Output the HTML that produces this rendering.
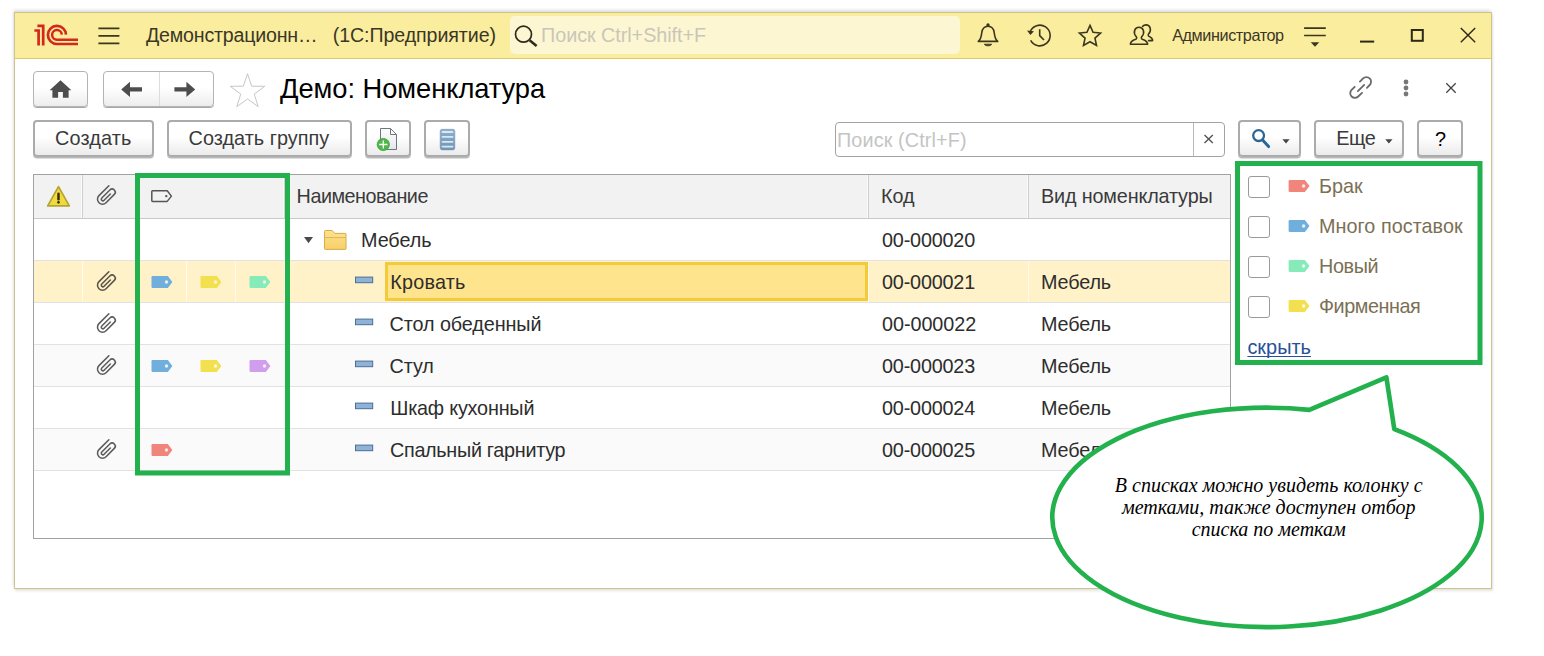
<!DOCTYPE html>
<html lang="ru">
<head>
<meta charset="utf-8">
<title>Демо: Номенклатура</title>
<style>
*{box-sizing:border-box;margin:0;padding:0}
html,body{width:1544px;height:656px;overflow:hidden;background:#fff}
body{position:relative;font-family:"Liberation Sans",Arial,sans-serif;color:#2e2e2e}
#win{position:absolute;left:14px;top:12px;width:1478px;height:577px;background:#fff;border:1px solid #cdc48c;box-shadow:-1.5px -2px 3px rgba(0,0,0,.14),0.5px 1.5px 2.5px rgba(0,0,0,.11)}
#tbar{position:absolute;left:15px;top:13px;width:1476px;height:46px;background:#fbed9e;border-bottom:1px solid #dccb6c}
#gsearch{position:absolute;left:510px;top:16px;width:450px;height:38px;border-radius:5px;background:#fdf6d3}
.t{position:absolute;white-space:pre;line-height:1}
.btn{position:absolute;border:1px solid #b4b4b4;border-radius:4px;background:linear-gradient(#fff 45%,#ededed);box-shadow:0 1px 0 #a8a8a8}
.cbtn{position:absolute;border:2px solid #ababab;border-radius:4px;background:linear-gradient(#fff 45%,#ebebeb);box-shadow:0 1.5px 0.6px #bababa}
svg{position:absolute;overflow:visible}
.box{position:absolute}
.chk{position:absolute;width:22px;height:22px;border:1px solid #9a9a9a;border-radius:3px;background:#fff}
</style>
</head>
<body>
<div id="win"></div>
<header id="titlebar">
<div id="tbar"></div><div id="gsearch"></div>
<svg style="left:0px;top:0px;" width="1544" height="656" viewBox="0 0 1544 656"><g fill="none" stroke="#d3281d" stroke-width="2.7" stroke-linejoin="miter"><path d="M34.4 30.5 H38.6 V45.4"/><path d="M37.4 25.8 H43.2 V45.4"/><path d="M66.01 34.63 A9.05 9.05 0 1 0 56.96 43.98 H78"/><path stroke-width="2.5" d="M61.81 34.63 A4.85 4.85 0 1 0 56.96 39.78 H78"/></g><g stroke="#3b371f" stroke-width="1.7"><path d="M98.4 28.3H119.4M98.4 35.8H119.4M98.4 43.3H119.4"/></g><g fill="none" stroke="#2f2c1c" stroke-width="1.7"><circle cx="523.5" cy="34.2" r="8"/><path stroke-width="2.6" d="M529.6 40.3L536.6 46"/></g><g fill="none" stroke="#3b371f" stroke-width="1.6" stroke-linejoin="round"><path d="M978.3 41.4 C981.2 39 981.3 36.5 981.7 33 C982.2 28.6 984.8 26.2 988 26.2 C991.2 26.2 993.8 28.6 994.3 33 C994.7 36.5 994.8 39 997.7 41.4 Z"/><circle cx="988" cy="24.9" r="0.9" fill="#3b371f"/><path d="M984.3 44.2 H991.7 C990.8 46.4 985.2 46.4 984.3 44.2Z" fill="#3b371f" stroke-width="0.8"/></g><g fill="none" stroke="#3b371f" stroke-width="1.6"><path d="M1030.07 31.96 A10.35 10.35 0 1 1 1030.66 40.36"/><path d="M1039.7 29.2 V35.6 L1044 40"/><path d="M1027 30.4 L1034 31.2 L1030.4 35Z" fill="#3b371f" stroke="none"/></g><polygon points="1090.00,25.40 1093.06,32.29 1100.56,33.07 1094.95,38.11 1096.52,45.48 1090.00,41.70 1083.48,45.48 1085.05,38.11 1079.44,33.07 1086.94,32.29" fill="none" stroke="#3b371f" stroke-width="1.6" stroke-linejoin="miter"/><g fill="none" stroke="#3b371f" stroke-width="1.6" stroke-linejoin="round" stroke-linecap="round"><path d="M1130.4 44.2 C1130.4 40.8 1134 40.3 1136.3 38.9 C1136.9 38.2 1136.9 37.6 1136.3 36.8 C1132.6 32.6 1134.6 27.3 1139 27.3 C1143.4 27.3 1145.4 32.6 1141.7 36.8 C1141.1 37.6 1141.1 38.2 1141.7 38.9 C1144 40.3 1147.6 40.8 1147.6 44.2 Z"/><path d="M1142.6 26.4 C1143.6 25.3 1144.8 24.9 1146 24.9 C1150.2 24.9 1152 30 1148.6 34 C1148 34.8 1148 35.4 1148.6 36.1 C1150.6 37.3 1152.6 37.8 1152.6 40.6 H1148.6"/></g><g stroke="#3b371f" stroke-width="1.6"><path d="M1304.1 28.1H1325.8M1304.1 35.5H1325.8"/><path d="M1310.7 42.3H1319.3L1315 46.8Z" fill="#3b371f" stroke="none"/></g><g stroke="#2c2a1a" fill="none"><path stroke-width="2" d="M1360 41.6H1374.2"/><rect x="1411.8" y="30" width="11" height="10.8" stroke-width="2"/><path stroke-width="1.45" d="M1460.8 27.9L1475.2 42.3M1475.2 27.9L1460.8 42.3"/></g></svg>
<div class="t" style="left:146.00px;top:26.11px;font-size:19.6px;color:#3a3726;letter-spacing:-0.195px;">Демонстрационн…</div>
<div class="t" style="left:332.70px;top:26.11px;font-size:19.6px;color:#3a3726;letter-spacing:-0.065px;">(1С:Предприятие)</div>
<div class="t" style="left:541.00px;top:26.44px;font-size:19.8px;color:#c9c6b8;letter-spacing:-0.045px;">Поиск Ctrl+Shift+F</div>
<div class="t" style="left:1172.20px;top:26.79px;font-size:16.2px;color:#3a3726;letter-spacing:-0.407px;">Администратор</div>
</header>
<nav id="navrow">
<div class="btn" style="left:33px;top:71px;width:55px;height:36px"></div>
<div class="btn" style="left:103px;top:71px;width:111px;height:36px"></div>
<div class="box" style="left:159px;top:72px;width:1px;height:34px;background:#dcdcdc"></div>
<svg style="left:0px;top:0px;" width="1544" height="656" viewBox="0 0 1544 656"><path fill="#4d4d4d" d="M60.5 80.3 L71.4 90.2 H68.6 V97.8 H62.9 V92 H58.1 V97.8 H52.4 V90.2 H49.6 Z"/><path fill="#4d4d4d" d="M121.2 89.4 L130 81.8 V87.2 H142 V91.6 H130 V97 Z"/><path fill="#4d4d4d" d="M195.2 89.4 L186.4 81.8 V87.2 H174.4 V91.6 H186.4 V97 Z"/><polygon points="247.50,73.70 251.67,86.16 264.81,86.28 254.25,94.09 258.20,106.62 247.50,99.00 236.80,106.62 240.75,94.09 230.19,86.28 243.33,86.16" fill="none" stroke="#c6c6c6" stroke-width="1"/><g fill="none" stroke="#6a6a6a" stroke-width="1.8" stroke-linecap="round"><path d="M1359.9 81.6 L1363.1 78.4 A4.6 4.6 0 0 1 1369.7 85 L1366.9 87.9"/><path d="M1357.9 91.2 L1364.2 84.9"/><path d="M1354.7 86.8 L1351.6 89.9 A4.6 4.6 0 0 0 1358.2 96.5 L1362 92.8"/></g><g fill="#777"><circle cx="1406" cy="82" r="2.4"/><circle cx="1406" cy="88" r="2.4"/><circle cx="1406" cy="94" r="2.4"/></g><path stroke="#444" stroke-width="1.3" d="M1446.3 83.3L1455.7 92.7M1455.7 83.3L1446.3 92.7"/></svg>
<div class="t" style="left:280.00px;top:75.49px;font-size:27.3px;color:#000;letter-spacing:-0.046px;">Демо: Номенклатура</div>
</nav>
<div id="cmdbar">
<div class="cbtn" style="left:33px;top:120px;width:121px;height:37px"></div>
<div class="cbtn" style="left:167px;top:120px;width:185px;height:37px"></div>
<div class="cbtn" style="left:365px;top:120px;width:46px;height:37px"></div>
<div class="cbtn" style="left:424px;top:120px;width:46px;height:37px"></div>
<div class="cbtn" style="left:1238px;top:120px;width:63px;height:37px"></div>
<div class="cbtn" style="left:1314px;top:120px;width:90px;height:37px"></div>
<div class="cbtn" style="left:1417px;top:120px;width:46px;height:37px"></div>
<div class="t" style="left:55.00px;top:129.00px;font-size:19.85px;color:#3a3a3a;letter-spacing:0.154px;">Создать</div>
<div class="t" style="left:188.60px;top:129.00px;font-size:19.85px;color:#3a3a3a;letter-spacing:0.024px;">Создать группу</div>
<div class="t" style="left:1336.20px;top:129.00px;font-size:19.85px;color:#3a3a3a;letter-spacing:-0.370px;">Еще</div>
<div class="t" style="left:1435.00px;top:130.20px;font-size:19.85px;color:#000;">?</div>
<div class="box" style="left:835px;top:122px;width:390px;height:35px;border:1px solid #a3a3a3;border-radius:4px;background:#fff"></div>
<div class="box" style="left:1193px;top:123px;width:1px;height:33px;background:#b9b9b9"></div>
<div class="t" style="left:837.00px;top:130.64px;font-size:19.8px;color:#c4c4c4;letter-spacing:0.131px;">Поиск (Ctrl+F)</div>
<svg style="left:0px;top:0px;" width="1544" height="656" viewBox="0 0 1544 656"><defs><linearGradient id="dg" x1="0" y1="0" x2="0" y2="1"><stop offset="0" stop-color="#fff"/><stop offset="1" stop-color="#e4e6ea"/></linearGradient><linearGradient id="lg" x1="0" y1="0" x2="0" y2="1"><stop offset="0" stop-color="#8fb0cc"/><stop offset="1" stop-color="#6f94b6"/></linearGradient></defs><path d="M380.5 128.5 H390.5 L396.5 134.5 V149.5 H380.5 Z" fill="url(#dg)" stroke="#70757f" stroke-width="1"/><path d="M390.5 128.5 V134.5 H396.5" fill="none" stroke="#70757f" stroke-width="1"/><circle cx="383.3" cy="144.5" r="6.1" fill="#4db848" stroke="#3c9c3c" stroke-width="0.8"/><path d="M379.2 144.5H387.4M383.3 140.4V148.6" stroke="#fff" stroke-width="1.3"/><rect x="440.2" y="129.3" width="14.6" height="20.6" rx="2" fill="url(#lg)" stroke="#7796b3" stroke-width="0.6"/><g stroke="#d8e8f4" stroke-width="1.8" stroke-linecap="round"><path d="M442.5 132H452.5M442.5 136.9H452.5M442.5 141.8H452.5M442.5 146.6H452.5"/></g><g fill="none" stroke="#2a6596"><circle cx="1258.6" cy="135.6" r="5.4" stroke-width="2.3"/><path stroke-width="3" stroke-linecap="round" d="M1262.8 140.2L1268.6 146.6"/></g><path fill="#444" d="M1282.4 139.2H1289.6000000000001L1286.0 143.39999999999998Z"/><path fill="#444" d="M1385.3 139.2H1392.5L1388.8999999999999 143.39999999999998Z"/><path stroke="#555" stroke-width="1.4" d="M1204.5 135L1212.8 143M1212.8 135L1204.5 143"/></svg>
</div>
<main id="list">
<div class="box" style="left:33px;top:174px;width:1198px;height:365px;border:1px solid #a2a2a2;background:#fff"></div>
<div class="box" style="left:34px;top:175px;width:1196px;height:44px;background:#f2f2f2;border-bottom:1px solid #c9c9c9"></div>
<div class="box" style="left:82px;top:175px;width:1px;height:43px;background:#cfcfcf"></div>
<div class="box" style="left:81px;top:175px;width:1px;height:43px;background:#fafafa"></div>
<div class="box" style="left:284px;top:175px;width:1px;height:43px;background:#cfcfcf"></div>
<div class="box" style="left:283px;top:175px;width:1px;height:43px;background:#fafafa"></div>
<div class="box" style="left:868px;top:175px;width:1px;height:43px;background:#cfcfcf"></div>
<div class="box" style="left:867px;top:175px;width:1px;height:43px;background:#fafafa"></div>
<div class="box" style="left:1028px;top:175px;width:1px;height:43px;background:#cfcfcf"></div>
<div class="box" style="left:1027px;top:175px;width:1px;height:43px;background:#fafafa"></div>
<div class="box" style="left:34px;top:219px;width:1196px;height:42px;background:#fff;border-bottom:1px solid #e2e2e2"></div>
<div class="box" style="left:34px;top:261px;width:1196px;height:42px;background:#fff2c9;border-bottom:1px solid #e2e2e2"></div>
<div class="box" style="left:34px;top:303px;width:1196px;height:42px;background:#fff;border-bottom:1px solid #e2e2e2"></div>
<div class="box" style="left:34px;top:345px;width:1196px;height:42px;background:#fafafa;border-bottom:1px solid #e2e2e2"></div>
<div class="box" style="left:34px;top:387px;width:1196px;height:42px;background:#fff;border-bottom:1px solid #e2e2e2"></div>
<div class="box" style="left:34px;top:429px;width:1196px;height:42px;background:#fafafa;border-bottom:1px solid #e2e2e2"></div>
<div class="box" style="left:82px;top:261px;width:1px;height:41px;background:#fffaeb"></div>
<div class="box" style="left:186px;top:261px;width:1px;height:41px;background:#fffaeb"></div>
<div class="box" style="left:235px;top:261px;width:1px;height:41px;background:#fffaeb"></div>
<div class="box" style="left:284px;top:261px;width:1px;height:41px;background:#fffaeb"></div>
<div class="box" style="left:868px;top:261px;width:1px;height:41px;background:#fffaeb"></div>
<div class="box" style="left:1028px;top:261px;width:1px;height:41px;background:#fffaeb"></div>
<div class="box" style="left:385px;top:262px;width:483px;height:38.5px;background:#ffe48e;border:3px solid #f2ca3a"></div>
<div class="t" style="left:296.60px;top:187.44px;font-size:19.8px;color:#3a3a3a;letter-spacing:-0.484px;">Наименование</div>
<div class="t" style="left:881.00px;top:187.44px;font-size:19.8px;color:#3a3a3a;letter-spacing:-0.045px;">Код</div>
<div class="t" style="left:1041.00px;top:187.44px;font-size:19.8px;color:#3a3a3a;letter-spacing:-0.145px;">Вид номенклатуры</div>
<div class="t" style="left:361.00px;top:230.84px;font-size:19.8px;color:#2d2d2d;letter-spacing:-0.055px;">Мебель</div>
<div class="t" style="left:882.00px;top:230.84px;font-size:19.8px;color:#2d2d2d;letter-spacing:-0.175px;">00-000020</div>
<div class="t" style="left:390.20px;top:272.84px;font-size:19.8px;color:#2d2d2d;letter-spacing:0.227px;">Кровать</div>
<div class="t" style="left:882.00px;top:272.84px;font-size:19.8px;color:#2d2d2d;letter-spacing:-0.175px;">00-000021</div>
<div class="t" style="left:1041.00px;top:272.84px;font-size:19.8px;color:#2d2d2d;letter-spacing:-0.135px;">Мебель</div>
<div class="t" style="left:389.60px;top:314.84px;font-size:19.8px;color:#2d2d2d;letter-spacing:-0.086px;">Стол обеденный</div>
<div class="t" style="left:882.00px;top:314.84px;font-size:19.8px;color:#2d2d2d;letter-spacing:-0.050px;">00-000022</div>
<div class="t" style="left:1041.00px;top:314.84px;font-size:19.8px;color:#2d2d2d;letter-spacing:-0.135px;">Мебель</div>
<div class="t" style="left:389.60px;top:356.84px;font-size:19.8px;color:#2d2d2d;letter-spacing:-0.141px;">Стул</div>
<div class="t" style="left:882.00px;top:356.84px;font-size:19.8px;color:#2d2d2d;letter-spacing:-0.175px;">00-000023</div>
<div class="t" style="left:1041.00px;top:356.84px;font-size:19.8px;color:#2d2d2d;letter-spacing:-0.135px;">Мебель</div>
<div class="t" style="left:390.20px;top:398.84px;font-size:19.8px;color:#2d2d2d;letter-spacing:-0.191px;">Шкаф кухонный</div>
<div class="t" style="left:882.00px;top:398.84px;font-size:19.8px;color:#2d2d2d;letter-spacing:-0.175px;">00-000024</div>
<div class="t" style="left:1041.00px;top:398.84px;font-size:19.8px;color:#2d2d2d;letter-spacing:-0.135px;">Мебель</div>
<div class="t" style="left:390.00px;top:440.84px;font-size:19.8px;color:#2d2d2d;letter-spacing:-0.296px;">Спальный гарнитур</div>
<div class="t" style="left:882.00px;top:440.84px;font-size:19.8px;color:#2d2d2d;letter-spacing:-0.175px;">00-000025</div>
<div class="t" style="left:1041.00px;top:440.84px;font-size:19.8px;color:#2d2d2d;letter-spacing:-0.135px;">Мебель</div>
<svg style="left:0px;top:0px;" width="1544" height="656" viewBox="0 0 1544 656"><path d="M58.5 186.6 L69.3 205.9 H47.7 Z" fill="#f0da3e" stroke="#b4a433" stroke-width="1.7" stroke-linejoin="round"/><path d="M58.5 193.7V199.2" stroke="#3a3008" stroke-width="2.5" stroke-linecap="round"/><circle cx="58.5" cy="202.3" r="1.35" fill="#3a3008"/><g transform="translate(102.30 192.30) rotate(-45)"><path d="M9.3 0 L-4.7 0 A5 5 0 0 0 -4.7 10 L7.0 10 A3.17 3.17 0 0 0 7.0 3.66 L-4.4 3.66 A1.62 1.62 0 0 0 -4.4 6.9 L4.5 6.9" fill="none" stroke="#5c5c5c" stroke-width="1.55" stroke-linecap="round"/></g><path d="M152.6 190.8 H167.2 L171.4 196.1 L167.2 201.4 H152.6 Q151.8 201.4 151.8 200.6 V191.6 Q151.8 190.8 152.6 190.8Z" fill="none" stroke="#555" stroke-width="1.5" stroke-linejoin="round"/><circle cx="166.3" cy="196.1" r="1.2" fill="#555"/><path fill="#4a4a4a" d="M304 237H313L308.5 243.3Z"/><defs><linearGradient id="fg" x1="0" y1="0" x2="0" y2="1"><stop offset="0" stop-color="#fce391"/><stop offset="1" stop-color="#f7d068"/></linearGradient></defs><path d="M325.5 230.5 H332.2 L334.8 233.4 H345.5 Q346 233.4 346 234 V248.6 Q346 249.4 345.2 249.4 H325.3 Q324.5 249.4 324.5 248.6 V231.5 Q324.5 230.5 325.5 230.5Z" fill="url(#fg)" stroke="#d8aa4c" stroke-width="1"/><path d="M324.8 237.6H345.8" stroke="#e0b456" stroke-width="1"/><rect x="355.5" y="277.1" width="17.2" height="5.6" fill="#8db3d9" stroke="#4d6f93" stroke-width="1"/><rect x="355.5" y="319.1" width="17.2" height="5.6" fill="#8db3d9" stroke="#4d6f93" stroke-width="1"/><rect x="355.5" y="361.1" width="17.2" height="5.6" fill="#8db3d9" stroke="#4d6f93" stroke-width="1"/><rect x="355.5" y="403.1" width="17.2" height="5.6" fill="#8db3d9" stroke="#4d6f93" stroke-width="1"/><rect x="355.5" y="445.1" width="17.2" height="5.6" fill="#8db3d9" stroke="#4d6f93" stroke-width="1"/><g transform="translate(102.30 278.30) rotate(-45)"><path d="M9.3 0 L-4.7 0 A5 5 0 0 0 -4.7 10 L7.0 10 A3.17 3.17 0 0 0 7.0 3.66 L-4.4 3.66 A1.62 1.62 0 0 0 -4.4 6.9 L4.5 6.9" fill="none" stroke="#5a5548" stroke-width="1.55" stroke-linecap="round"/></g><g transform="translate(102.30 320.30) rotate(-45)"><path d="M9.3 0 L-4.7 0 A5 5 0 0 0 -4.7 10 L7.0 10 A3.17 3.17 0 0 0 7.0 3.66 L-4.4 3.66 A1.62 1.62 0 0 0 -4.4 6.9 L4.5 6.9" fill="none" stroke="#5c5c5c" stroke-width="1.55" stroke-linecap="round"/></g><g transform="translate(102.30 362.30) rotate(-45)"><path d="M9.3 0 L-4.7 0 A5 5 0 0 0 -4.7 10 L7.0 10 A3.17 3.17 0 0 0 7.0 3.66 L-4.4 3.66 A1.62 1.62 0 0 0 -4.4 6.9 L4.5 6.9" fill="none" stroke="#5c5c5c" stroke-width="1.55" stroke-linecap="round"/></g><g transform="translate(102.30 446.30) rotate(-45)"><path d="M9.3 0 L-4.7 0 A5 5 0 0 0 -4.7 10 L7.0 10 A3.17 3.17 0 0 0 7.0 3.66 L-4.4 3.66 A1.62 1.62 0 0 0 -4.4 6.9 L4.5 6.9" fill="none" stroke="#5c5c5c" stroke-width="1.55" stroke-linecap="round"/></g><path fill="#70aedc" d="M152.70 276.00 H167.80 L172.40 281.95 L167.80 287.90 H152.70 Q151.50 287.90 151.50 286.70 V277.20 Q151.50 276.00 152.70 276.00Z"/><circle cx="166.50" cy="281.95" r="1.7" fill="#e8f0e2"/><path fill="#f2e04e" d="M201.70 276.00 H216.80 L221.40 281.95 L216.80 287.90 H201.70 Q200.50 287.90 200.50 286.70 V277.20 Q200.50 276.00 201.70 276.00Z"/><circle cx="215.50" cy="281.95" r="1.7" fill="#fdf6cf"/><path fill="#86ebb9" d="M250.70 276.00 H265.80 L270.40 281.95 L265.80 287.90 H250.70 Q249.50 287.90 249.50 286.70 V277.20 Q249.50 276.00 250.70 276.00Z"/><circle cx="264.50" cy="281.95" r="1.7" fill="#e6f8dc"/><path fill="#70aedc" d="M152.70 360.00 H167.80 L172.40 365.95 L167.80 371.90 H152.70 Q151.50 371.90 151.50 370.70 V361.20 Q151.50 360.00 152.70 360.00Z"/><circle cx="166.50" cy="365.95" r="1.7" fill="#e6f2fa"/><path fill="#f2e04e" d="M201.70 360.00 H216.80 L221.40 365.95 L216.80 371.90 H201.70 Q200.50 371.90 200.50 370.70 V361.20 Q200.50 360.00 201.70 360.00Z"/><circle cx="215.50" cy="365.95" r="1.7" fill="#fdf9dc"/><path fill="#d09eec" d="M250.70 360.00 H265.80 L270.40 365.95 L265.80 371.90 H250.70 Q249.50 371.90 249.50 370.70 V361.20 Q249.50 360.00 250.70 360.00Z"/><circle cx="264.50" cy="365.95" r="1.7" fill="#f6ebfb"/><path fill="#f0867b" d="M152.70 444.00 H167.80 L172.40 449.95 L167.80 455.90 H152.70 Q151.50 455.90 151.50 454.70 V445.20 Q151.50 444.00 152.70 444.00Z"/><circle cx="166.50" cy="449.95" r="1.7" fill="#fde6e3"/></svg>
</main>
<aside id="tagfilter">
<div class="chk" style="left:1248px;top:176px"></div>
<div class="t" style="left:1319.00px;top:176.84px;font-size:19.8px;color:#7b7053;letter-spacing:-0.028px;">Брак</div>
<div class="chk" style="left:1248px;top:216px"></div>
<div class="t" style="left:1319.00px;top:216.84px;font-size:19.8px;color:#7b7053;letter-spacing:0.045px;">Много поставок</div>
<div class="chk" style="left:1248px;top:256px"></div>
<div class="t" style="left:1319.00px;top:256.84px;font-size:19.8px;color:#7b7053;letter-spacing:-0.378px;">Новый</div>
<div class="chk" style="left:1248px;top:296px"></div>
<div class="t" style="left:1319.00px;top:296.84px;font-size:19.8px;color:#7b7053;letter-spacing:-0.443px;">Фирменная</div>
<svg style="left:0px;top:0px;" width="1544" height="656" viewBox="0 0 1544 656"><path fill="#f0867b" d="M1289.80 180.10 H1304.90 L1309.50 186.05 L1304.90 192.00 H1289.80 Q1288.60 192.00 1288.60 190.80 V181.30 Q1288.60 180.10 1289.80 180.10Z"/><circle cx="1303.60" cy="186.05" r="1.7" fill="#fde6e3"/><path fill="#70aedc" d="M1289.80 220.10 H1304.90 L1309.50 226.05 L1304.90 232.00 H1289.80 Q1288.60 232.00 1288.60 230.80 V221.30 Q1288.60 220.10 1289.80 220.10Z"/><circle cx="1303.60" cy="226.05" r="1.7" fill="#e6f2fa"/><path fill="#86ebb9" d="M1289.80 260.10 H1304.90 L1309.50 266.05 L1304.90 272.00 H1289.80 Q1288.60 272.00 1288.60 270.80 V261.30 Q1288.60 260.10 1289.80 260.10Z"/><circle cx="1303.60" cy="266.05" r="1.7" fill="#e9fbf2"/><path fill="#f2e04e" d="M1289.80 300.10 H1304.90 L1309.50 306.05 L1304.90 312.00 H1289.80 Q1288.60 312.00 1288.60 310.80 V301.30 Q1288.60 300.10 1289.80 300.10Z"/><circle cx="1303.60" cy="306.05" r="1.7" fill="#fdf9dc"/></svg>
<div class="t" style="left:1247.40px;top:338.35px;font-size:19.9px;color:#27509d;letter-spacing:0.017px;text-decoration:underline;text-decoration-skip-ink:none;text-underline-offset:2px;text-decoration-thickness:1.3px;">скрыть</div>
</aside>
<div id="annotations">
<svg style="left:0px;top:0px;" width="1544" height="656" viewBox="0 0 1544 656"><rect x="137.5" y="175.5" width="150" height="297.5" fill="none" stroke="#22b14c" stroke-width="5"/><rect x="1237.5" y="163.5" width="242.5" height="199" fill="none" stroke="#22b14c" stroke-width="5"/><path d="M1309.3 409.85 L1386.4 377.4 L1394.3 429.06 A214.7 109.7 0 1 1 1309.3 409.85Z" fill="#fff" stroke="#22b14c" stroke-width="4.6" stroke-linejoin="round"/></svg>
<div class="t" style="left:1068.7px;top:475.2px;width:400px;text-align:center;font-family:'Liberation Serif','Times New Roman',serif;font-style:italic;font-size:20px;line-height:21.85px;color:#000;white-space:pre">В списках можно увидеть колонку с
метками, также доступен отбор
списка по меткам</div>
</div>
</body>
</html>
